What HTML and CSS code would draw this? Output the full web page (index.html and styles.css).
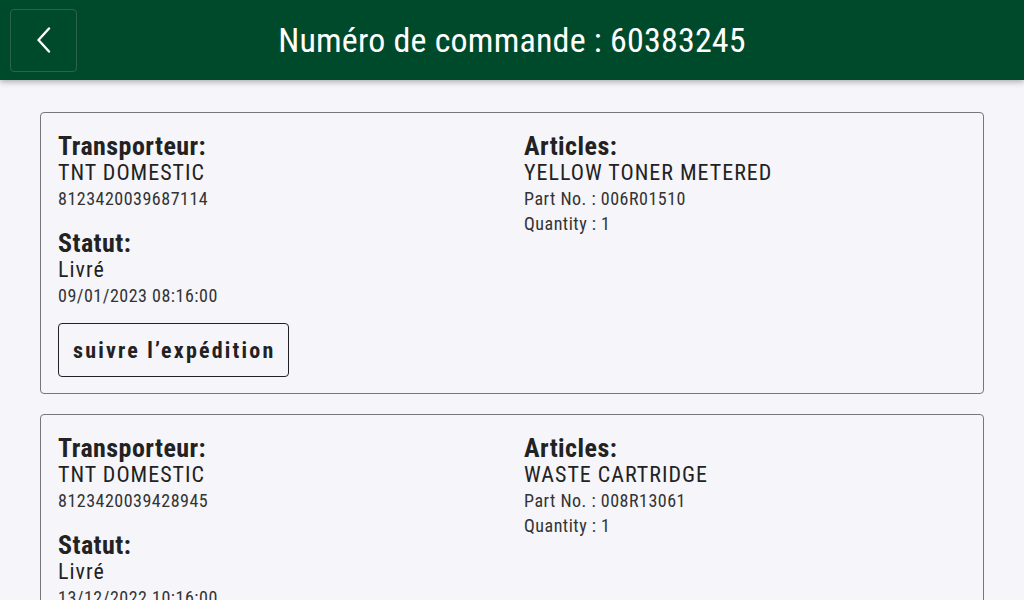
FILE: index.html
```html
<!DOCTYPE html>
<html lang="fr">
<head>
    <meta charset="UTF-8">
    <meta name="viewport" content="width=device-width, initial-scale=1.0">
    <title>Numéro de commande : 60383245</title>
    <link rel="stylesheet" href="styles.css">
</head>
<body>

    <header class="topbar">
        <button class="back-btn" aria-label="Retour">
            <svg width="16" height="26" viewBox="0 0 16 26">
                <polyline points="13,1.5 2.5,13 13,24.5" fill="none" stroke="#ffffff" stroke-width="2.4" stroke-linecap="round" stroke-linejoin="round"/>
            </svg>
        </button>
        <h1 class="topbar-title">Numéro de commande : 60383245</h1>
        <span></span>
    </header>

    <main class="shipments">

        <section class="shipment">
            <div class="col">
                <div class="field">
                    <h2 class="label">Transporteur:</h2>
                    <p class="value">TNT DOMESTIC</p>
                    <p class="sub">8123420039687114</p>
                </div>
                <div class="field">
                    <h2 class="label">Statut:</h2>
                    <p class="value">Livré</p>
                    <p class="sub">09/01/2023 08:16:00</p>
                </div>
                <button class="track-btn">suivre l’expédition</button>
            </div>
            <div class="col">
                <div class="field">
                    <h2 class="label">Articles:</h2>
                    <p class="value">YELLOW TONER METERED</p>
                    <p class="sub">Part No. : 006R01510</p>
                    <p class="sub">Quantity : 1</p>
                </div>
            </div>
        </section>

        <section class="shipment">
            <div class="col">
                <div class="field">
                    <h2 class="label">Transporteur:</h2>
                    <p class="value">TNT DOMESTIC</p>
                    <p class="sub">8123420039428945</p>
                </div>
                <div class="field">
                    <h2 class="label">Statut:</h2>
                    <p class="value">Livré</p>
                    <p class="sub">13/12/2022 10:16:00</p>
                </div>
                <button class="track-btn">suivre l’expédition</button>
            </div>
            <div class="col">
                <div class="field">
                    <h2 class="label">Articles:</h2>
                    <p class="value">WASTE CARTRIDGE</p>
                    <p class="sub">Part No. : 008R13061</p>
                    <p class="sub">Quantity : 1</p>
                </div>
            </div>
        </section>

    </main>

</body>
</html>
```

FILE: styles.css
```css
body {
    margin: 0;
    font-family: Roboto, "Liberation Sans", sans-serif;
    font-stretch: 87.5%;
    background-color: #f5f5fa;
    color: #222222;
}
.topbar {
    display: grid;
    grid-template-columns: 1fr auto 1fr;
    align-items: center;
    height: 80px;
    padding: 0 10px;
    background-color: #004a2c;
    box-shadow: 0 2px 6px rgba(0, 0, 0, 0.3);
}
.back-btn {
    justify-self: start;
    display: flex;
    align-items: center;
    justify-content: center;
    width: 67px;
    height: 63px;
    padding: 0;
    background: transparent;
    border: 1px solid #2d6349;
    border-radius: 4px;
}
.topbar-title {
    margin: 0;
    color: #ffffff;
    font-size: 34px;
    font-weight: 400;
    letter-spacing: 0.2px;
}
.shipments {
    padding: 32px 40px;
}
.shipment {
    display: grid;
    grid-template-columns: 1fr 1fr;
    column-gap: 24px;
    padding: 19px 17px 16px;
    margin-bottom: 20px;
    border: 1px solid #777777;
    border-radius: 4px;
}
.field {
    margin-bottom: 18px;
}
.label {
    margin: 0;
    font-size: 26px;
    font-weight: 700;
    line-height: 28px;
    letter-spacing: 0.45px;
    color: #222222;
}
.value {
    margin: 0;
    font-size: 22px;
    line-height: 26px;
    letter-spacing: 1px;
}
.sub {
    margin: 0;
    font-size: 18px;
    line-height: 25px;
    letter-spacing: 0.5px;
    color: #333333;
}
.track-btn {
    margin-top: -3px;
    padding: 0 13px 0 14px;
    height: 54px;
    background: transparent;
    border: 1px solid #222222;
    border-radius: 4px;
    font-family: inherit;
    font-stretch: 87.5%;
    font-size: 22px;
    font-weight: 700;
    letter-spacing: 2.2px;
    color: #222222;
}
```
